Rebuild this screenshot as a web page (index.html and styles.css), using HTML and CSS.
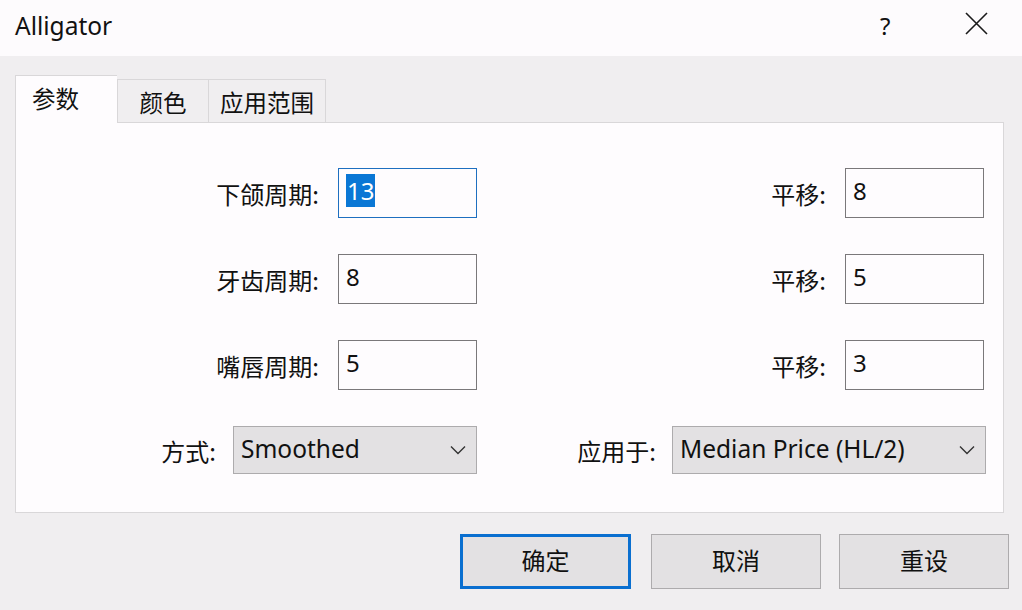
FILE: index.html
```html
<!DOCTYPE html>
<html lang="zh-CN">
<head>
<meta charset="utf-8">
<title>Alligator</title>
<link rel="stylesheet" href="styles.css">
</head>
<body>
<div class="dialog">
  <div class="titlebar">
    <div class="title">Alligator</div>
    <div class="help">?</div>
    <div class="close">
      <svg width="23" height="23" viewBox="0 0 23 23"><path d="M1 1 L22 22 M22 1 L1 22" stroke="#1a1a1a" stroke-width="1.6" fill="none"/></svg>
    </div>
  </div>
  <div class="body">
    <div class="tabs">
      <div class="tab active">参数</div>
      <div class="tab t2">颜色</div>
      <div class="tab t3">应用范围</div>
    </div>
    <div class="panel">
      <div class="row">
        <div class="half left">
          <span class="label">下颌周期:</span>
          <div class="edit focused"><span class="sel">13</span></div>
        </div>
        <div class="half right">
          <span class="label">平移:</span>
          <div class="edit">8</div>
        </div>
      </div>
      <div class="row">
        <div class="half left">
          <span class="label">牙齿周期:</span>
          <div class="edit">8</div>
        </div>
        <div class="half right">
          <span class="label">平移:</span>
          <div class="edit">5</div>
        </div>
      </div>
      <div class="row">
        <div class="half left">
          <span class="label">嘴唇周期:</span>
          <div class="edit">5</div>
        </div>
        <div class="half right">
          <span class="label">平移:</span>
          <div class="edit">3</div>
        </div>
      </div>
      <div class="row selrow">
        <div class="half left">
          <span class="label">方式:</span>
          <div class="combo c1"><span>Smoothed</span>
            <svg class="arrow" width="16" height="10" viewBox="0 0 16 10"><path d="M1 1.5 L8 8.5 L15 1.5" stroke="#333" stroke-width="1.4" fill="none"/></svg>
          </div>
        </div>
        <div class="half right r2">
          <span class="label">应用于:</span>
          <div class="combo c2"><span>Median Price (HL/2)</span>
            <svg class="arrow" width="16" height="10" viewBox="0 0 16 10"><path d="M1 1.5 L8 8.5 L15 1.5" stroke="#333" stroke-width="1.4" fill="none"/></svg>
          </div>
        </div>
      </div>
    </div>
    <div class="buttons">
      <div class="btn default">确定</div>
      <div class="btn">取消</div>
      <div class="btn">重设</div>
    </div>
  </div>
</div>
</body>
</html>
```

FILE: styles.css
```css
html, body {
  margin: 0;
  padding: 0;
}
body {
  width: 1022px;
  height: 610px;
  overflow: hidden;
  background: #f0eef0;
  font-family: "Noto Sans", "Noto Sans CJK SC", sans-serif;
  color: #111;
}
.dialog {
  display: flex;
  flex-direction: column;
  height: 610px;
}
.titlebar {
  height: 56px;
  background: #fdfbfd;
  display: flex;
  align-items: center;
  padding-left: 15px;
  box-sizing: border-box;
}
.title {
  font-family: "Noto Sans", sans-serif;
  font-size: 24.5px;
  flex: 1;
  padding-bottom: 6px;
}
.help {
  font-family: "Noto Sans", sans-serif;
  font-size: 24px;
  width: 24px;
  margin-right: 61px;
  padding-bottom: 6px;
}
.close {
  width: 23px;
  height: 23px;
  margin-right: 34px;
  margin-bottom: 10px;
  display: flex;
}
.body {
  flex: 1;
  padding: 19px 0 0 15px;
}
.tabs {
  display: flex;
  align-items: flex-end;
  height: 47px;
  position: relative;
  z-index: 2;
}
.tab {
  font-family: "Noto Sans CJK SC", sans-serif;
  font-size: 23.5px;
  box-sizing: border-box;
  height: 43px;
  border: 1px solid #d9d7d9;
  border-bottom: none;
  background: #f0eef0;
  display: flex;
  align-items: center;
  justify-content: center;
  padding-top: 2px;
}
.tab.active {
  height: 48px;
  width: 102px;
  background: #fefcfe;
  margin-bottom: -1px;
  border-right: none;
  justify-content: flex-start;
  padding-left: 16px;
  padding-bottom: 6px;
}
.tab.t2 {
  width: 92px;
  border-left: 1px solid #d9d7d9;
}
.tab.t3 {
  width: 117px;
  border-left: none;
}
.panel {
  width: 989px;
  height: 391px;
  box-sizing: border-box;
  border: 1px solid #d9d7d9;
  background: #fefcfe;
  padding-top: 45px;
  display: flex;
  flex-direction: column;
  gap: 36px;
}
.row {
  display: flex;
  height: 50px;
}
.half {
  display: flex;
  align-items: center;
  justify-content: flex-end;
  gap: 19px;
}
.half.left {
  width: 461px;
}
.half.right {
  flex: 1;
  padding-right: 19px;
}
.label {
  font-family: "Noto Sans CJK SC", sans-serif;
  font-size: 24px;
  white-space: nowrap;
}
.edit {
  width: 139px;
  height: 50px;
  box-sizing: border-box;
  border: 1px solid #7a787a;
  background: #fefcfe;
  font-family: "Noto Sans", sans-serif;
  font-size: 24px;
  line-height: 44px;
  padding-left: 7px;
}
.edit.focused {
  border-color: #1e6fc0;
}
.sel {
  background: #0a77d5;
  color: #fff;
  display: inline-block;
  line-height: 33px;
  padding: 0 1px 0 1px;
}
.selrow {
  height: 48px;
}
.selrow .half {
  gap: 17px;
}
.selrow .half.r2 {
  padding-right: 17px;
  gap: 16px;
}
.combo {
  height: 48px;
  box-sizing: border-box;
  border: 1px solid #adabad;
  background: #e3e1e3;
  display: flex;
  align-items: center;
  justify-content: space-between;
  padding: 0 10px 0 7px;
  font-family: "Noto Sans", sans-serif;
  font-size: 24.5px;
}
.combo span {
  padding-bottom: 3px;
}
.combo.c1 {
  width: 244px;
}
.combo.c2 {
  width: 314px;
}
.buttons {
  display: flex;
  justify-content: flex-end;
  gap: 18px;
  padding: 21px 13px 0 0;
}
.btn {
  width: 170px;
  height: 55px;
  box-sizing: border-box;
  border: 1px solid #adabad;
  background: #e3e1e3;
  font-family: "Noto Sans CJK SC", sans-serif;
  font-size: 24px;
  display: flex;
  align-items: center;
  justify-content: center;
  padding-bottom: 4px;
}
.btn.default {
  width: 171px;
  margin-right: 2px;
  border: 3px solid #0a6fd0;
}
```
